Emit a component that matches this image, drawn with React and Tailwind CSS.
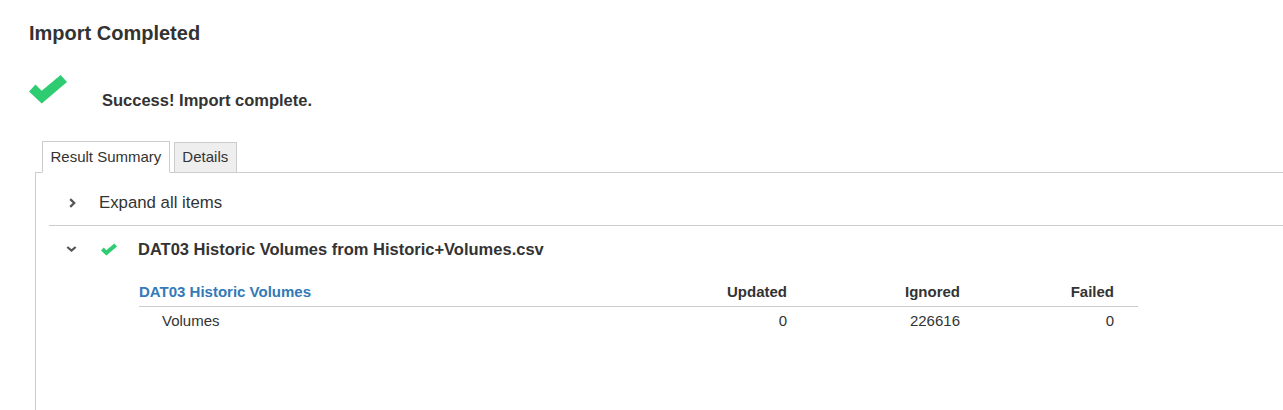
import React from 'react'

const font = { fontFamily: '"Liberation Sans", Arial, sans-serif' }

function Check({ className }) {
  return (
    <svg viewBox="0 0 38 28.5" className={className}>
      <polygon points="0,16.5 6.5,9.6 12.7,15.8 31.6,0 38,7.1 12.7,28.5" fill="#2ecc71" />
    </svg>
  )
}

function ChevronRight() {
  return (
    <svg viewBox="0 0 7 10" className="w-[7px] h-[10px]">
      <polyline points="1.2,1.2 5.2,5 1.2,8.8" fill="none" stroke="#555" strokeWidth="2.3" />
    </svg>
  )
}

function ChevronDown() {
  return (
    <svg viewBox="0 0 11 6" className="w-[11px] h-[6px]">
      <polyline points="1.3,1 5.5,4.6 9.7,1" fill="none" stroke="#555" strokeWidth="2.2" />
    </svg>
  )
}

const rows = [{ name: 'Volumes', updated: 0, ignored: 226616, failed: 0 }]

function App() {
  return (
    <div className="w-[1283px] h-[410px] overflow-hidden bg-white text-[#333]" style={font}>
      <div className="pl-[29px] pt-[21px]">
        <h1 className="text-[20px] leading-[24px] font-bold">Import Completed</h1>
        <div className="flex items-start mt-[30px]">
          <Check className="w-[38px] h-[28.5px]" />
          <span className="ml-[35px] mt-[15px] text-[16.5px] leading-[20px] font-bold">Success! Import complete.</span>
        </div>
      </div>

      <div className="ml-[35px] mt-[31px] flex items-end pl-[7px] border-b border-[#ccc]">
        <div className="-mb-px h-[32px] px-[7.5px] flex items-center border border-[#ccc] border-b-white bg-white text-[15px]">
          Result Summary
        </div>
        <div className="-mb-px ml-[4px] h-[31px] px-[7.5px] flex items-center border border-[#ccc] bg-[#eee] text-[15px]">
          Details
        </div>
      </div>

      <div className="ml-[35px] h-[240px] border-l border-[#ccc]">
        <div className="ml-[13px] h-[53px] pt-[8px] flex items-center border-b border-[#ccc]">
          <div className="pl-[20px] flex items-center">
            <ChevronRight />
          </div>
          <span className="ml-[23px] text-[16.8px]">Expand all items</span>
        </div>

        <div className="ml-[13px]">
          <div className="mt-[13px] h-[20px] flex items-center">
            <div className="pl-[17px] flex items-center">
              <ChevronDown />
            </div>
            <Check className="ml-[24px] w-[16px] h-[13px]" />
            <span className="ml-[21px] text-[16.5px] leading-[20px] font-bold">
              DAT03 Historic Volumes from Historic+Volumes.csv
            </span>
          </div>

          <div className="ml-[90px] mt-[22px] w-[999px] text-[15px]">
            <div className="h-[26px] pt-[1px] flex leading-[20px] font-bold border-b border-[#ccc]">
              <div className="flex-1 text-[#337ab7]">DAT03 Historic Volumes</div>
              <div className="w-[140px] text-right">Updated</div>
              <div className="w-[173px] text-right">Ignored</div>
              <div className="w-[178px] pr-[24px] text-right">Failed</div>
            </div>
            {rows.map((r) => (
              <div key={r.name} className="pt-[4px] flex leading-[20px]">
                <div className="flex-1 pl-[23px]">{r.name}</div>
                <div className="w-[140px] text-right">{r.updated}</div>
                <div className="w-[173px] text-right">{r.ignored}</div>
                <div className="w-[178px] pr-[24px] text-right">{r.failed}</div>
              </div>
            ))}
          </div>
        </div>
      </div>
    </div>
  )
}

export default App
